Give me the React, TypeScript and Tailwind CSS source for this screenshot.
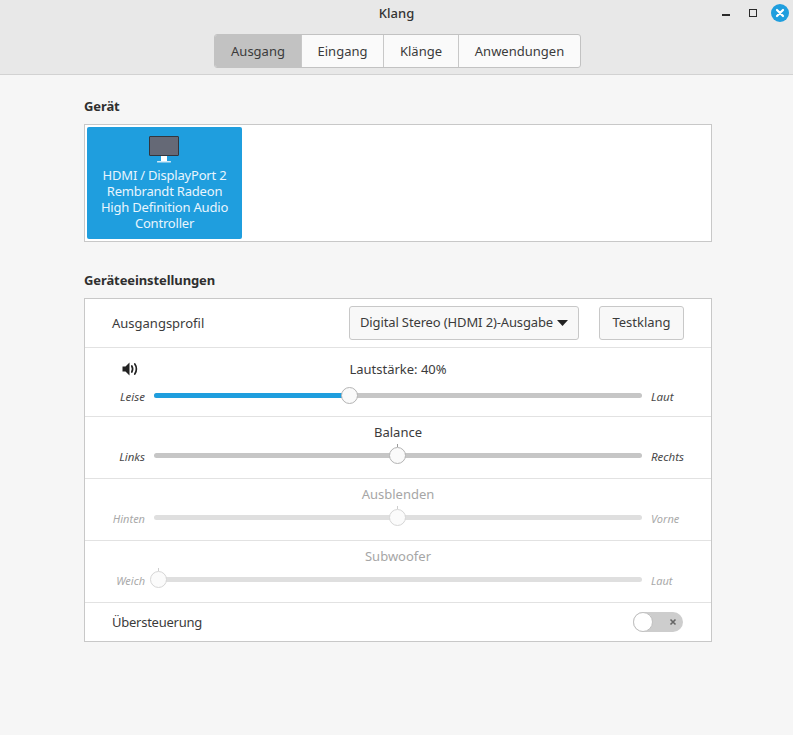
const font = "font-['Noto_Sans',sans-serif]";

function VolumeIcon() {
    return (
        <svg width="16" height="14" viewBox="0 0 16 14" fill="none" className="text-[#222]">
            <path d="M0.5 4.5H3.5L7.5 0.5V13.5L3.5 9.5H0.5Z" fill="currentColor" />
            <path d="M9.8 4C10.8 5.8 10.8 8.2 9.8 10" stroke="currentColor" strokeWidth="1.7" strokeLinecap="round" />
            <path d="M12.8 2C14.9 4.8 14.9 9.2 12.8 12" stroke="currentColor" strokeWidth="1.7" strokeLinecap="round" />
        </svg>
    );
}

function MonitorIcon() {
    return (
        <svg width="32" height="27" viewBox="0 0 32 27" className="block -ml-[2px]">
            <rect x="1.5" y="0.5" width="29" height="19" rx="0.5" fill="#656976" stroke="#33363d" />
            <rect x="13" y="20" width="6" height="5" fill="#ffffff" />
            <rect x="9" y="25" width="14" height="1.5" rx="0.5" fill="#cfe9f8" />
        </svg>
    );
}

function Slider({ title, left, right, value, fill, disabled, icon, tick }: {
    title: string;
    left: string;
    right: string;
    value: number;
    fill?: boolean;
    disabled?: boolean;
    icon?: boolean;
    tick?: boolean;
}) {
    const labelColor = disabled ? 'text-[#a9a9a9] text-[11px]' : 'text-[#4a4a4a] text-[11.5px]';
    // thumb centre travels 478px, starting a little way into the track
    const thumbX = 3.8 + value * 4.78;
    return (
        <div className={`h-full border-b border-[#e2e2e2] grid grid-cols-[60px_488px_1fr] content-start gap-x-[9px] ${icon ? 'pt-[11px] gap-y-[8px]' : 'pt-[5px] gap-y-[5px]'}`}>
            <div className="flex justify-end h-[20px] items-center pr-[7px]">
                {icon && <VolumeIcon />}
            </div>
            <div className={`text-center text-[13px] leading-[20px] ${disabled ? 'text-[#a6a6a6]' : 'text-[#3b3b3b]'}`}>
                {title}
            </div>
            <div />
            <div className={`mt-[2px] text-right italic leading-[16px] ${labelColor}`}>{left}</div>
            <div className="flex items-center h-[16px]">
                <div className={`relative w-full h-[5px] rounded-full ${disabled ? 'bg-[#dfdfdf]' : 'bg-[#c6c6c6]'}`}>
                    {fill && <div className="absolute left-0 top-0 h-full rounded-full bg-[#1f9ede]" style={{ width: `${thumbX}px` }} />}
                    {tick && <div className={`absolute top-[-9px] w-px h-[3px] ${disabled ? 'bg-[#cfcfcf]' : 'bg-[#999]'}`} style={{ left: `${thumbX}px` }} />}
                    <div
                        className={`absolute top-[-6px] w-[17px] h-[17px] -ml-[8px] rounded-full border ${disabled ? 'bg-[#fbfbfb] border-[#d6d6d6]' : 'bg-[#fafafa] border-[#b4b4b4]'}`}
                        style={{ left: `${thumbX}px` }}
                    />
                </div>
            </div>
            <div className={`mt-[2px] italic leading-[16px] ${labelColor}`}>{right}</div>
        </div>
    );
}

const tabs = [
    { name: 'Ausgang', width: 'w-[86px]' },
    { name: 'Eingang', width: 'w-[82px]' },
    { name: 'Klänge', width: 'w-[75px]' },
    { name: 'Anwendungen', width: 'w-[122px]' },
];

export default function App() {
    return (
        <div className={`${font} w-[793px] h-[735px] bg-[#f6f6f6] text-[#3b3b3b] text-[13px] overflow-hidden`}>
            {/* Title bar and tabs */}
            <header className="relative h-[75px] bg-[#e8e8e8] border-b border-[#d2d2d2] flex flex-col items-center">
                <div className="h-[34px] pt-[3px] leading-[20px] font-medium text-[#333]">Klang</div>
                <div className="flex h-[34px] ml-[2px] rounded-[3px] border border-[#c2c2c2] bg-[#fafafa] overflow-hidden">
                    {tabs.map((tab, i) => (
                        <div
                            key={tab.name}
                            className={`flex items-center justify-center pt-[1px] ${tab.width} ${i > 0 ? 'border-l border-[#c8c8c8]' : ''} ${i === 0 ? 'bg-[#c2c2c2]' : ''}`}
                        >
                            {tab.name}
                        </div>
                    ))}
                </div>
                <div className="absolute right-[4px] top-[4px] flex items-center">
                    <div className="w-[8px] h-[1.5px] bg-[#2a2a2a] mt-[4px] mr-[19px]" />
                    <div className="w-[8px] h-[8px] border border-[#2a2a2a] mr-[14px]" />
                    <div className="w-[18px] h-[18px] rounded-full bg-[#1f9ede] flex items-center justify-center">
                        <svg width="10" height="10" viewBox="0 0 10 10">
                            <path d="M2 2L8 8M8 2L2 8" stroke="#fff" strokeWidth="2.2" strokeLinecap="round" />
                        </svg>
                    </div>
                </div>
            </header>

            <main className="pl-[84px] pr-[81px] w-full">
                <h2 className="mt-[21px] h-[20px] leading-[20px] font-bold text-[#2f2f2f] tracking-[-0.1px]">Gerät</h2>
                <div className="mt-[8px] h-[118px] bg-white border border-[#c8c8c8] p-[2px]">
                    <div className="w-[155px] h-[112px] rounded-[2px] bg-[#1f9ede] text-[#e8f5fd] flex flex-col items-center pt-[9px] text-center leading-[16px] tracking-[-0.2px]">
                        <MonitorIcon />
                        <div className="mt-[4px] whitespace-nowrap">
                            HDMI / DisplayPort 2<br />
                            Rembrandt Radeon<br />
                            High Definition Audio<br />
                            Controller
                        </div>
                    </div>
                </div>

                <h2 className="mt-[28px] h-[20px] leading-[20px] font-bold text-[#2f2f2f] tracking-[-0.1px]">Geräteeinstellungen</h2>
                <div className="mt-[8px] bg-white border border-[#c8c8c8]">
                    <div className="h-[49px] border-b border-[#e2e2e2] flex items-center pl-[27px] pr-[27px]">
                        <span className="flex-1 pt-[1px]">Ausgangsprofil</span>
                        <div className="w-[230px] h-[34px] rounded-[3px] border border-[#c8c8c8] bg-[#f8f8f8] flex items-center justify-between pl-[10px] pr-[10px]">
                            <span className="whitespace-nowrap tracking-[-0.13px]">Digital Stereo (HDMI 2)-Ausgabe</span>
                            <svg width="11" height="6" viewBox="0 0 11 6"><path d="M0 0H11L5.5 6Z" fill="#222" /></svg>
                        </div>
                        <div className="ml-[20px] w-[85px] h-[34px] rounded-[3px] border border-[#c8c8c8] bg-[#f8f8f8] flex items-center justify-center">Testklang</div>
                    </div>
                    <div className="h-[69px]"><Slider title="Lautstärke: 40%" left="Leise" right="Laut" value={40} fill icon /></div>
                    <div className="h-[62px]"><Slider title="Balance" left="Links" right="Rechts" value={50} tick /></div>
                    <div className="h-[62px]"><Slider title="Ausblenden" left="Hinten" right="Vorne" value={50} tick disabled /></div>
                    <div className="h-[62px]"><Slider title="Subwoofer" left="Weich" right="Laut" value={0} tick disabled /></div>
                    <div className="h-[38px] flex items-center justify-between pl-[27px] pr-[28px]">
                        <span className="pt-[1px] tracking-[-0.25px]">Übersteuerung</span>
                        <div className="relative w-[50px] h-[20px] rounded-full bg-[#cdcdcd]">
                            <div className="absolute left-0 top-0 w-[20px] h-[20px] rounded-full bg-white border border-[#c0c0c0]" />
                            <svg className="absolute right-[6px] top-[6px]" width="8" height="8" viewBox="0 0 8 8">
                                <path d="M1.5 1.5L6.5 6.5M6.5 1.5L1.5 6.5" stroke="#666" strokeWidth="1.6" />
                            </svg>
                        </div>
                    </div>
                </div>
            </main>
        </div>
    );
}
